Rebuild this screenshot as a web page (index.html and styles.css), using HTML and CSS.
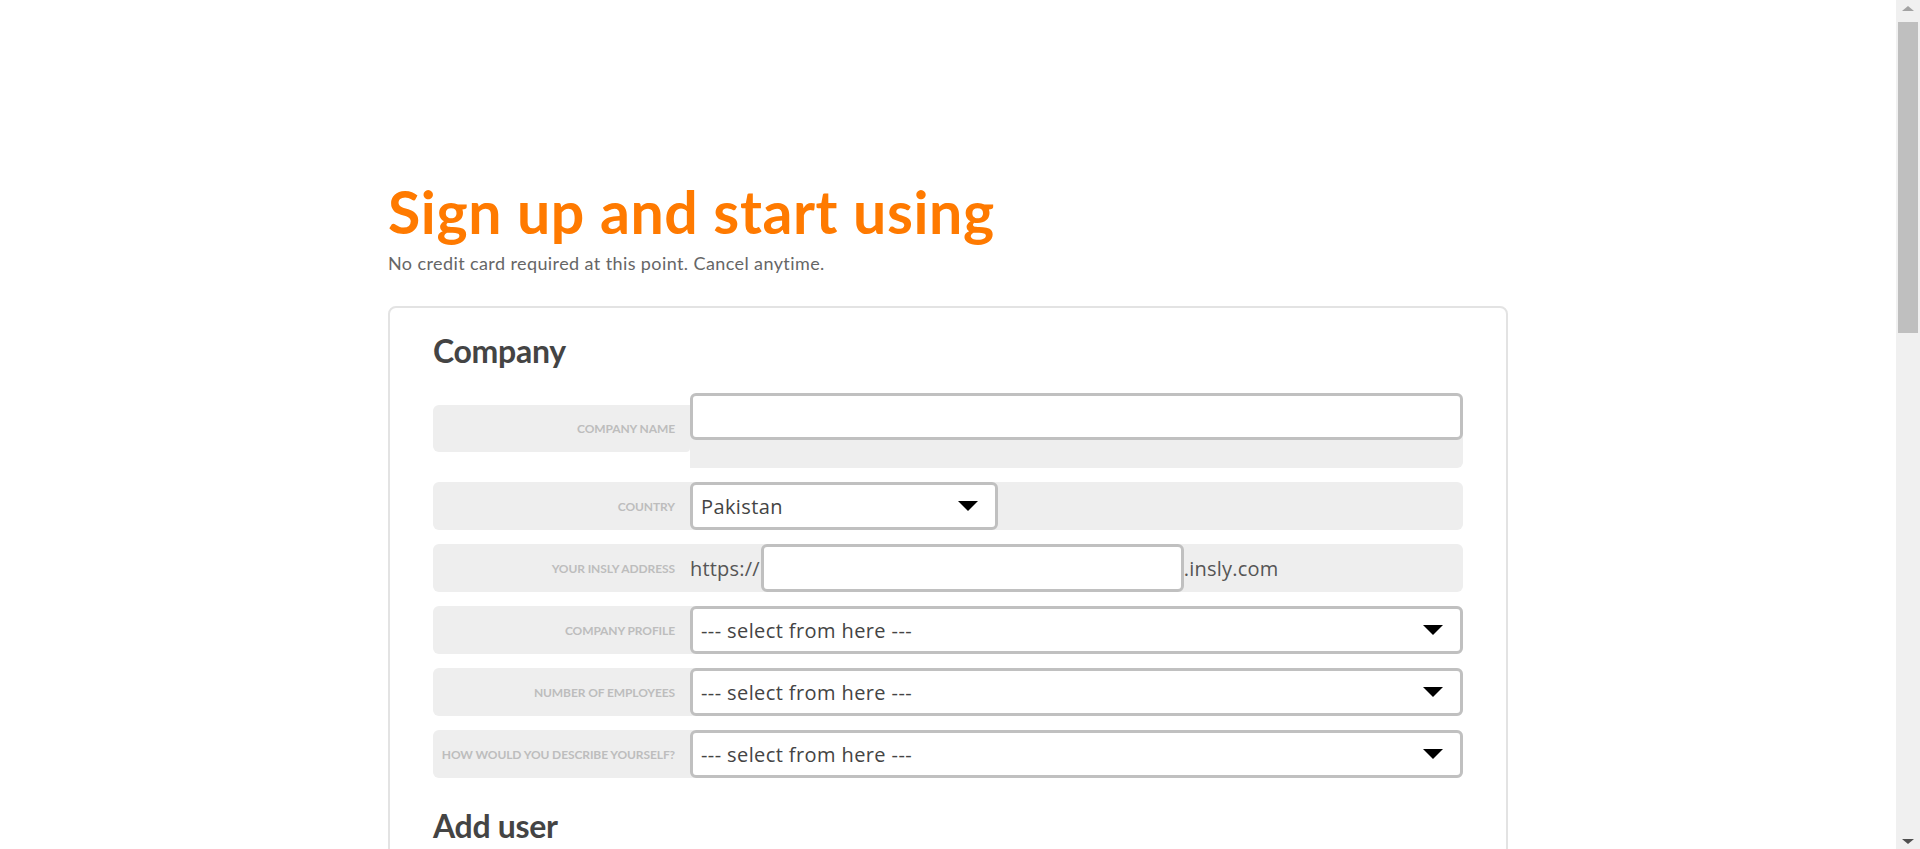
FILE: index.html
```html
<!DOCTYPE html>
<html lang="en">
<head>
<meta charset="utf-8">
<title>Sign up - Insly</title>
<link rel="stylesheet" href="styles.css">
</head>
<body>
<main class="page">
  <h1 class="title">Sign up and start using</h1>
  <p class="subtitle">No credit card required at this point. Cancel anytime.</p>

  <form class="card">
    <h2 class="section-title">Company</h2>

    <div class="row row-first">
      <label class="row-label">Company name</label>
      <div class="row-field row-field-tall">
        <input class="text-input input-full" type="text">
      </div>
    </div>

    <div class="row">
      <label class="row-label">Country</label>
      <div class="row-field">
        <div class="select select-short"><select><option>Pakistan</option></select></div>
      </div>
    </div>

    <div class="row">
      <label class="row-label">Your insly address</label>
      <div class="row-field row-field-address">
        <span class="affix">https://</span>
        <input class="text-input input-address" type="text">
        <span class="affix">.insly.com</span>
      </div>
    </div>

    <div class="row">
      <label class="row-label">Company profile</label>
      <div class="row-field">
        <div class="select"><select><option>--- select from here ---</option></select></div>
      </div>
    </div>

    <div class="row">
      <label class="row-label">Number of employees</label>
      <div class="row-field">
        <div class="select"><select><option>--- select from here ---</option></select></div>
      </div>
    </div>

    <div class="row">
      <label class="row-label">How would you describe yourself?</label>
      <div class="row-field">
        <div class="select"><select><option>--- select from here ---</option></select></div>
      </div>
    </div>

    <h2 class="section-title section-title-next">Add user</h2>

    <div class="row">
      <label class="row-label">Administrator account</label>
      <div class="row-field"><input class="text-input input-full" type="text"></div>
    </div>
    <div class="row">
      <label class="row-label">Manager full name</label>
      <div class="row-field"><input class="text-input input-full" type="text"></div>
    </div>
    <div class="row">
      <label class="row-label">E-mail</label>
      <div class="row-field"><input class="text-input input-full" type="text"></div>
    </div>
    <div class="row">
      <label class="row-label">Phone</label>
      <div class="row-field"><input class="text-input input-full" type="text"></div>
    </div>
    <div class="row">
      <label class="row-label">Password</label>
      <div class="row-field"><input class="text-input input-full" type="password"></div>
    </div>
    <div class="row">
      <label class="row-label">Repeat password</label>
      <div class="row-field"><input class="text-input input-full" type="password"></div>
    </div>

    <h2 class="section-title section-title-next">Terms and conditions</h2>
    <div class="row">
      <label class="row-label">I agree</label>
      <div class="row-field"><span class="affix">I agree to the terms and conditions</span></div>
    </div>
    <div class="actions">
      <button class="submit" type="button">Sign me up</button>
    </div>
  </form>
</main>

<div class="scrollbar" aria-hidden="true">
  <span class="sb-arrow sb-up"></span>
  <span class="sb-thumb"></span>
  <span class="sb-arrow sb-down"></span>
</div>
</body>
</html>
```

FILE: styles.css
```css
html {
  background: #ffffff;
}

body {
  margin: 0;
  font-family: Lato, "Open Sans", Arial, sans-serif;
  color: #444444;
}

::-webkit-scrollbar {
  width: 0;
  height: 0;
}

/* window scrollbar drawn over the page edge */
.scrollbar {
  position: fixed;
  top: 0;
  right: 0;
  width: 24px;
  height: 100vh;
  background: #f0f0f0;
  display: flex;
  flex-direction: column;
  align-items: center;
}

.sb-arrow {
  flex: none;
  width: 0;
  height: 0;
  border-left: 6px solid transparent;
  border-right: 6px solid transparent;
}

.sb-up {
  margin-top: 6px;
  border-bottom: 5px solid #a3a3a3;
}

.sb-thumb {
  flex: none;
  width: 20px;
  height: 311px;
  margin-top: 11px;
  background: #bfbfbf;
}

.sb-down {
  margin-top: auto;
  margin-bottom: 5px;
  border-top: 5px solid #505050;
}

.page {
  width: 1120px;
  margin: 0 0 0 388px;
  padding-top: 176px;
  min-height: 2030px;
}

.title {
  margin: 0;
  font-size: 59px;
  line-height: 72px;
  font-weight: 700;
  color: #ff7a00;
  letter-spacing: 0.6px;
}

.subtitle {
  margin: 5px 0 0;
  font-size: 18px;
  line-height: 20px;
  color: #666666;
  letter-spacing: 0.4px;
}

.card {
  margin-top: 33px;
  border: 2px solid #e3e3e3;
  border-radius: 8px;
  padding: 24px 43px 60px 43px;
}

.section-title {
  margin: 0 0 35px;
  font-size: 32px;
  line-height: 38px;
  font-weight: 700;
  color: #444444;
  letter-spacing: -0.3px;
}

.section-title-next {
  margin-top: 29px;
  margin-bottom: 30px;
}

.row {
  display: grid;
  grid-template-columns: 257px 1fr;
  height: 48px;
  margin-bottom: 14px;
  background: #eeeeee;
  border-radius: 6px;
}

.row-first {
  height: auto;
  background: transparent;
  align-items: start;
}

.row-label {
  display: flex;
  align-items: center;
  justify-content: flex-end;
  padding-right: 15px;
  font-size: 12px;
  font-weight: 700;
  text-transform: uppercase;
  color: #bdbdbd;
  letter-spacing: -0.1px;
  white-space: nowrap;
  height: 48px;
  box-sizing: border-box;
}

.row-first .row-label {
  height: 47px;
  background: #eeeeee;
  border-radius: 6px 0 4px 6px;
}

.row-field {
  display: flex;
  align-items: center;
  min-width: 0;
}

.row-field-tall {
  height: 63px;
  align-items: flex-start;
  background: #eeeeee;
  border-radius: 0 6px 6px 0;
}

.text-input {
  box-sizing: border-box;
  height: 48px;
  border: 3px solid #c0c0c0;
  border-radius: 6px;
  background: #ffffff;
  font-family: "Open Sans", sans-serif;
  font-size: 20px;
  color: #444444;
  padding: 0 9px;
  outline: none;
}

.input-full {
  width: 100%;
}

.row-field-tall .input-full {
  height: 47px;
  margin-top: -12px;
}

.input-address {
  width: 423px;
  margin-left: 1px;
}

.affix {
  font-family: "Open Sans", sans-serif;
  font-size: 20px;
  color: #555555;
  letter-spacing: 0.2px;
}

.select {
  position: relative;
  width: 100%;
  height: 48px;
}

.select-short {
  width: 308px;
}

.select select {
  appearance: none;
  -webkit-appearance: none;
  box-sizing: border-box;
  width: 100%;
  height: 48px;
  border: 3px solid #c0c0c0;
  border-radius: 6px;
  background: #ffffff;
  font-family: "Open Sans", sans-serif;
  font-size: 20px;
  color: #444444;
  letter-spacing: 0.4px;
  padding: 0 40px 0 8px;
  outline: none;
}

.select::after {
  content: "";
  position: absolute;
  right: 20px;
  top: 19px;
  border-left: 10px solid transparent;
  border-right: 10px solid transparent;
  border-top: 10px solid #000000;
  pointer-events: none;
}

.actions {
  display: flex;
  justify-content: flex-end;
  margin-top: 30px;
}

.submit {
  height: 52px;
  padding: 0 40px;
  border: none;
  border-radius: 6px;
  background: #ff7a00;
  color: #ffffff;
  font-family: Lato, sans-serif;
  font-size: 20px;
  font-weight: 700;
}
```
